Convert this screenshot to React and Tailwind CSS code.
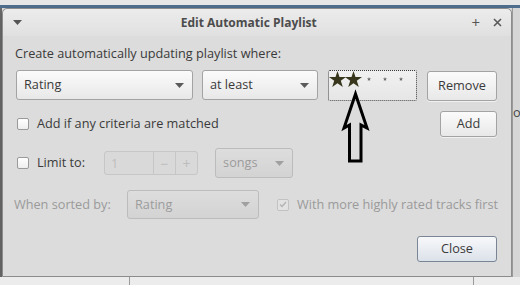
import React from 'react';

const btn = 'flex items-center justify-center rounded-[3px] border border-[#a3a3a3] bg-[linear-gradient(#fbfbfb,#e8e8e8)] shadow-[0_1px_0_rgba(255,255,255,0.6)] text-[#3a3a3a]';

function Caret({ color = '#5a5a5a' }) {
  return (
    <svg width="9" height="5" viewBox="0 0 9 5" className="shrink-0">
      <path d="M0 0 H9 L4.5 5 Z" fill={color} />
    </svg>
  );
}

function Combo({ label, width, height = 'h-[30px]', disabled }) {
  return (
    <div
      className={`${width} ${height} shrink-0 flex items-center justify-between pl-[7px] pr-[8px] rounded-[3px] border ${
        disabled
          ? 'border-[#bcbcbc] bg-[linear-gradient(#dddddd,#d3d3d3)] text-[#9c9c9c]'
          : 'border-[#a3a3a3] bg-[linear-gradient(#fbfbfb,#e8e8e8)] text-[#3a3a3a]'
      }`}
    >
      <span>{label}</span>
      <Caret color={disabled ? '#a0a0a0' : '#5a5a5a'} />
    </div>
  );
}

function Checkbox({ checked, disabled }) {
  return (
    <div
      className={`w-[12px] h-[12px] shrink-0 rounded-[2px] border flex items-center justify-center ${
        disabled ? 'border-[#c2c2c2] bg-[#e2e2e2]' : 'border-[#9a9a9a] bg-[linear-gradient(#ffffff,#eeeeee)]'
      }`}
    >
      {checked && (
        <svg width="8" height="7" viewBox="0 0 8 7">
          <path d="M1 3.5 L3 5.5 L7 1" fill="none" stroke="#b3b3b3" strokeWidth="1.4" />
        </svg>
      )}
    </div>
  );
}

function Stars() {
  const star = 'M8.5 0 L10.5 6 L17 6 L11.8 9.8 L13.8 16 L8.5 12.2 L3.2 16 L5.2 9.8 L0 6 L6.5 6 Z';
  return (
    <svg width="88" height="20" viewBox="0 0 88 20">
      <path d={star} transform="translate(0,0)" fill="#38361d" />
      <path d={star} transform="translate(16,0)" fill="#38361d" />
      {[38, 54, 70].map((x) => (
        <path key={x} d="M2 0 L2.6 1.4 L4 1.5 L2.9 2.4 L3.2 4 L2 3.1 L0.8 4 L1.1 2.4 L0 1.5 L1.4 1.4 Z" transform={`translate(${x},6)`} fill="#6a6a6a" />
      ))}
    </svg>
  );
}

export default function App() {
  return (
    <div className="relative w-[520px] h-[285px] overflow-hidden bg-[#ececec] flex flex-col font-['Open_Sans',sans-serif] text-[12.7px] text-[#3a3a3a] whitespace-nowrap">
      <div className="h-[5px] shrink-0 bg-[#e6e6e6]" />
      <div className="h-[272px] shrink-0 flex bg-[linear-gradient(#4f6e8d_0px,#4f6e8d_3px,#dedede_3px)]">
        <div className="w-[2px] mt-[3px] bg-[#6b6b6b]" />

        {/* Dialog */}
        <div className="w-[510px] shrink-0 mt-[3px] h-[269px] flex flex-col rounded-t-[5px] border border-[#8c8c8c] bg-[#dcdcdc] shadow-[0_2px_4px_rgba(0,0,0,0.25)]">
          <div className="h-[27px] shrink-0 flex items-center pl-[10px] pr-[9px] rounded-t-[5px] bg-[linear-gradient(#ececec,#e0e0e0)]">
            <Caret color="#555" />
            <div className="flex-1 text-center font-bold text-[12px] text-[#4c4c4c] ml-[4px]">Edit Automatic Playlist</div>
            <span className="text-[#555] text-[15px] leading-none mr-[13px]">+</span>
            <svg width="9" height="9" viewBox="0 0 9 9" className="shrink-0">
              <path d="M1 1 L8 8 M8 1 L1 8" stroke="#5a5a5a" strokeWidth="1.6" />
            </svg>
          </div>

          <div className="flex flex-col pl-[13px] pr-[14px]">
            <div className="mt-[8px] h-[18px] leading-[18px] -ml-[1px]">Create automatically updating playlist where:</div>

            <div className="mt-[8px] h-[31px] flex items-start">
              <Combo label="Rating" width="w-[177px]" />
              <div className="ml-[9px]">
                <Combo label="at least" width="w-[116px]" />
              </div>
              <div className="ml-[10px] w-[89px] h-[31px] shrink-0 border border-dotted border-[#3a3a3a] bg-[linear-gradient(#f1f1f1,#e6e6e6)] rounded-[2px]">
                <Stars />
              </div>
              <div className={`${btn} ml-[10px] mt-[1px] w-[70px] h-[30px] shrink-0`}>Remove</div>
            </div>

            <div className="mt-[10px] h-[26px] flex items-center">
              <div className="ml-[1px]">
                <Checkbox />
              </div>
              <span className="ml-[8px]">Add if any criteria are matched</span>
              <div className={`${btn} ml-auto w-[57px] h-[26px]`}>Add</div>
            </div>

            <div className="mt-[11px] h-[30px] flex items-center">
              <div className="ml-[1px]">
                <Checkbox />
              </div>
              <span className="ml-[8px]">Limit to:</span>
              <div className="ml-[19px] w-[94px] h-[24px] shrink-0 flex rounded-[3px] border border-[#c6c6c6] bg-[#d9d9d9] text-[#bdbdbd]">
                <span className="flex-1 pl-[6px] leading-[22px]">1</span>
                <span className="w-[22px] border-l border-[#c6c6c6] flex items-center justify-center text-[14px]">−</span>
                <span className="w-[22px] border-l border-[#c6c6c6] flex items-center justify-center text-[14px]">+</span>
              </div>
              <div className="ml-[17px]">
                <Combo label="songs" width="w-[78px]" disabled />
              </div>
            </div>

            <div className="mt-[12px] h-[29px] flex items-center text-[#9a9a9a]">
              <span className="-ml-[2px] w-[113px] shrink-0">When sorted by:</span>
              <div>
                <Combo label="Rating" width="w-[132px]" height="h-[29px]" disabled />
              </div>
              <div className="ml-[18px]">
                <Checkbox checked disabled />
              </div>
              <span className="ml-[8px]">With more highly rated tracks first</span>
            </div>

            <div className="mt-[17px] flex justify-end">
              <div className="w-[80px] h-[26px] flex items-center justify-center rounded-[3px] border border-[#7a8696] bg-[linear-gradient(#f7f8fa,#dce2ea)] text-[#3a3a3a]">
                Close
              </div>
            </div>
          </div>
        </div>

        <div className="flex-1 mt-[3px] bg-[#d6d6d6] border-l border-[#9a9a9a] pt-[95px] text-[#444] overflow-hidden">
          o
        </div>
      </div>
      <div className="flex-1 flex bg-[#ececec]">
        <div className="ml-[129px] w-[1px] bg-[#9a9a9a]" />
        <div className="ml-[343px] w-[1px] bg-[#9a9a9a]" />
      </div>

      {/* annotation arrow */}
      <svg className="absolute left-0 top-0 pointer-events-none" width="520" height="285" viewBox="0 0 520 285">
        <path
          d="M355.5 94 L344 128 L349.5 125 L349.5 161 L361 161 L361 125 L367 128 Z"
          fill="none"
          stroke="#000"
          strokeWidth="3"
          strokeLinejoin="miter"
        />
      </svg>
    </div>
  );
}
